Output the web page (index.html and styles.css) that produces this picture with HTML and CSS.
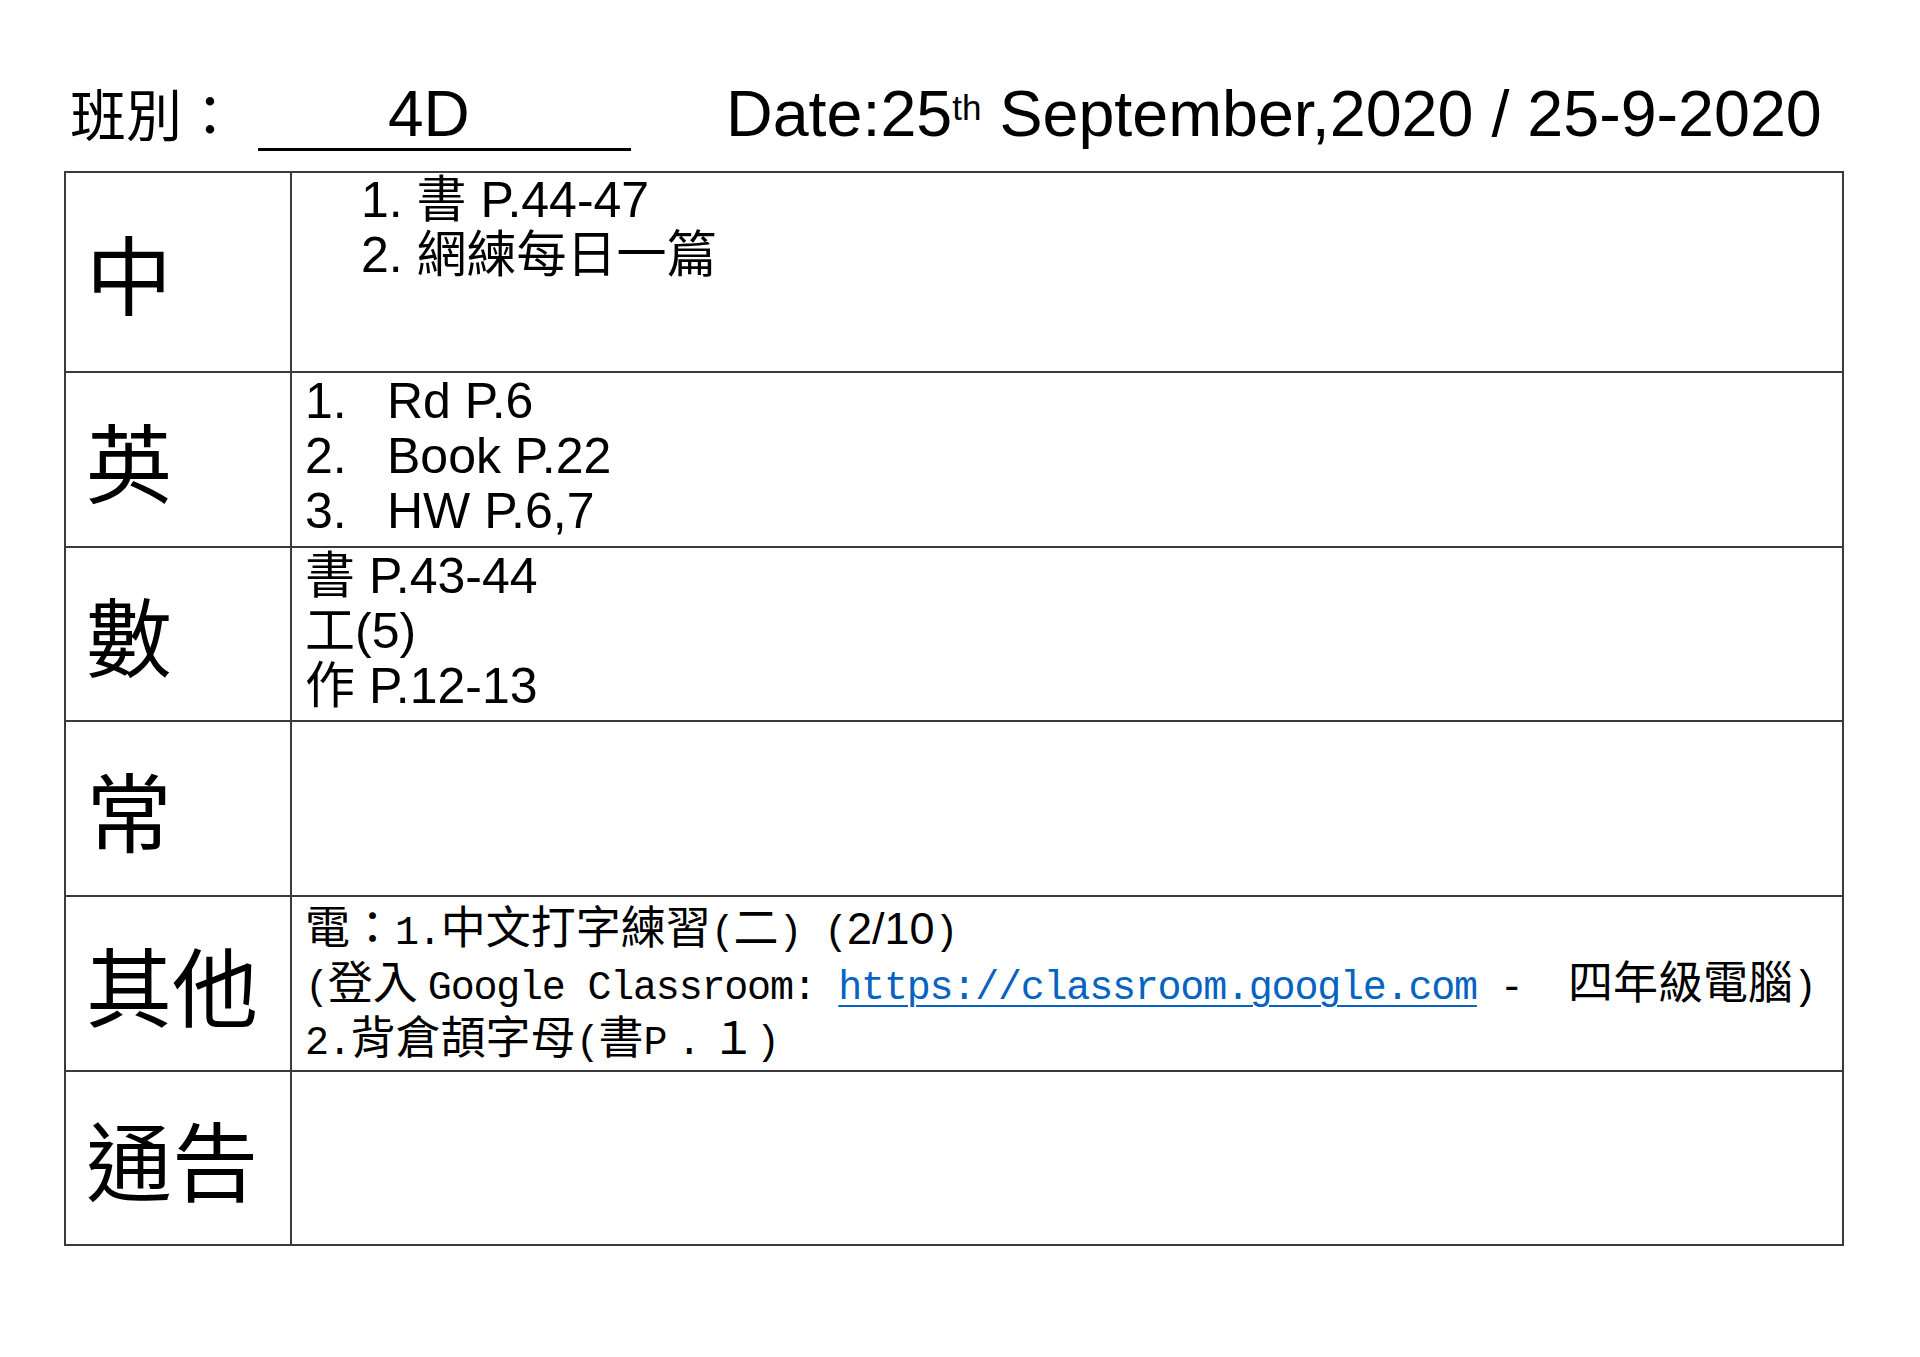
FILE: index.html
```html
<!DOCTYPE html>
<html lang="zh-Hant">
<head>
<meta charset="utf-8">
<title>4D 家課 25-9-2020</title>
<link rel="stylesheet" href="styles.css">
</head>
<body>
<div class="page">
  <header class="top">
    <span class="cls-label">班別：</span>
    <span class="cls-value">4D</span>
    <span class="date">Date:25<sup class="ord">th</sup> September,2020 / 25-9-2020</span>
  </header>

  <div class="sheet">
    <div class="subject">中</div>
    <div class="work work-indent">
      <div class="line">1. 書 P.44-47</div>
      <div class="line">2. 網練每日一篇</div>
    </div>

    <div class="subject">英</div>
    <div class="work work-pad">
      <div class="line"><span class="num">1.</span>Rd P.6</div>
      <div class="line"><span class="num">2.</span>Book P.22</div>
      <div class="line"><span class="num">3.</span>HW P.6,7</div>
    </div>

    <div class="subject">數</div>
    <div class="work work-pad">
      <div class="line">書 P.43-44</div>
      <div class="line">工(5)</div>
      <div class="line">作 P.12-13</div>
    </div>

    <div class="subject">常</div>
    <div class="work"></div>

    <div class="subject">其他</div>
    <div class="work work-ming">
      <div class="line">電：<span class="mono">1.</span>中文打字練習<span class="mono">(</span>二<span class="mono">) (</span><span class="arial">2/10</span><span class="mono">)</span></div>
      <div class="line"><span class="mono">(</span>登入<span class="mono latin-gap">Google Classroom: </span><a class="link mono" href="https://classroom.google.com">https://classroom.google.com</a><span class="mono">&nbsp;-&nbsp;&nbsp;</span>四年級電腦<span class="mono">)</span></div>
      <div class="line"><span class="mono">2.</span>背倉頡字母<span class="mono">(</span>書<span class="mono">P</span><span class="mono dot">.</span>１<span class="mono">)</span></div>
    </div>

    <div class="subject">通告</div>
    <div class="work"></div>
  </div>
</div>
</body>
</html>
```

FILE: styles.css
```css
html, body {
  margin: 0;
  padding: 0;
  background: #ffffff;
  color: #000000;
}

.page {
  width: 1920px;
  height: 1357px;
  padding-left: 64px;
  box-sizing: border-box;
}

/* ---------- header ---------- */
.top {
  display: flex;
  align-items: baseline;
  height: 171px;
  box-sizing: border-box;
  padding-top: 75px;
  padding-left: 6px;
  line-height: 74px;
  white-space: nowrap;
}

.cls-label {
  font-family: "Noto Sans CJK TC", "Noto Sans CJK SC", sans-serif;
  font-size: 56px;
}

.cls-value {
  font-family: "Liberation Sans", Arial, sans-serif;
  font-size: 64px;
  line-height: 64px;
  width: 373px;
  box-sizing: border-box;
  margin-left: 20px;
  padding-left: 130px;
  padding-bottom: 2px;
  border-bottom: 3px solid #000;
}

.date {
  font-family: "Liberation Sans", Arial, sans-serif;
  font-size: 64.6px;
  margin-left: 95px;
}

.ord {
  font-size: 35px;
  line-height: 1;
  vertical-align: 16px;
}

/* ---------- table ---------- */
.sheet {
  display: grid;
  grid-template-columns: 226px 1fr;
  grid-template-rows: 200px 175px 174px 175px 175px 174px;
  width: 1780px;
  box-sizing: border-box;
  border-top: 2px solid #3a3a3a;
  border-left: 2px solid #3a3a3a;
}

.subject,
.work {
  box-sizing: border-box;
  border-right: 2px solid #3a3a3a;
  border-bottom: 2px solid #3a3a3a;
}

.subject {
  display: flex;
  align-items: center;
  padding-left: 20px;
  font-family: "Noto Sans CJK TC", "Noto Sans CJK SC", serif;
  font-size: 86px;
  line-height: 1;
}

.work {
  padding-left: 13px;
  font-family: "Liberation Sans", Arial, "Noto Sans CJK TC", sans-serif;
  font-size: 50px;
  line-height: 55px;
  white-space: nowrap;
}

.work-indent {
  padding-left: 69px;
}

.work-pad {
  padding-top: 1px;
}

.line {
  height: 55px;
}

.num {
  display: inline-block;
  width: 82px;
}

/* row with Ming-style text */
.work-ming {
  font-family: "Noto Sans CJK TC", "Noto Sans CJK SC", serif;
  font-size: 45px;
  line-height: 55px;
}

.mono {
  font-family: "Liberation Mono", "Courier New", monospace;
  font-size: 40px;
  letter-spacing: -1.2px;
  line-height: 1;
}

.latin-gap {
  margin-left: 10px;
}

.dot {
  padding: 0 11px;
}

.arial {
  font-family: "Liberation Sans", Arial, sans-serif;
  font-size: 45px;
  line-height: 1;
}

.link {
  color: #0563c1;
  text-decoration: underline;
  text-underline-offset: 6px;
  text-decoration-thickness: 2px;
}
```
